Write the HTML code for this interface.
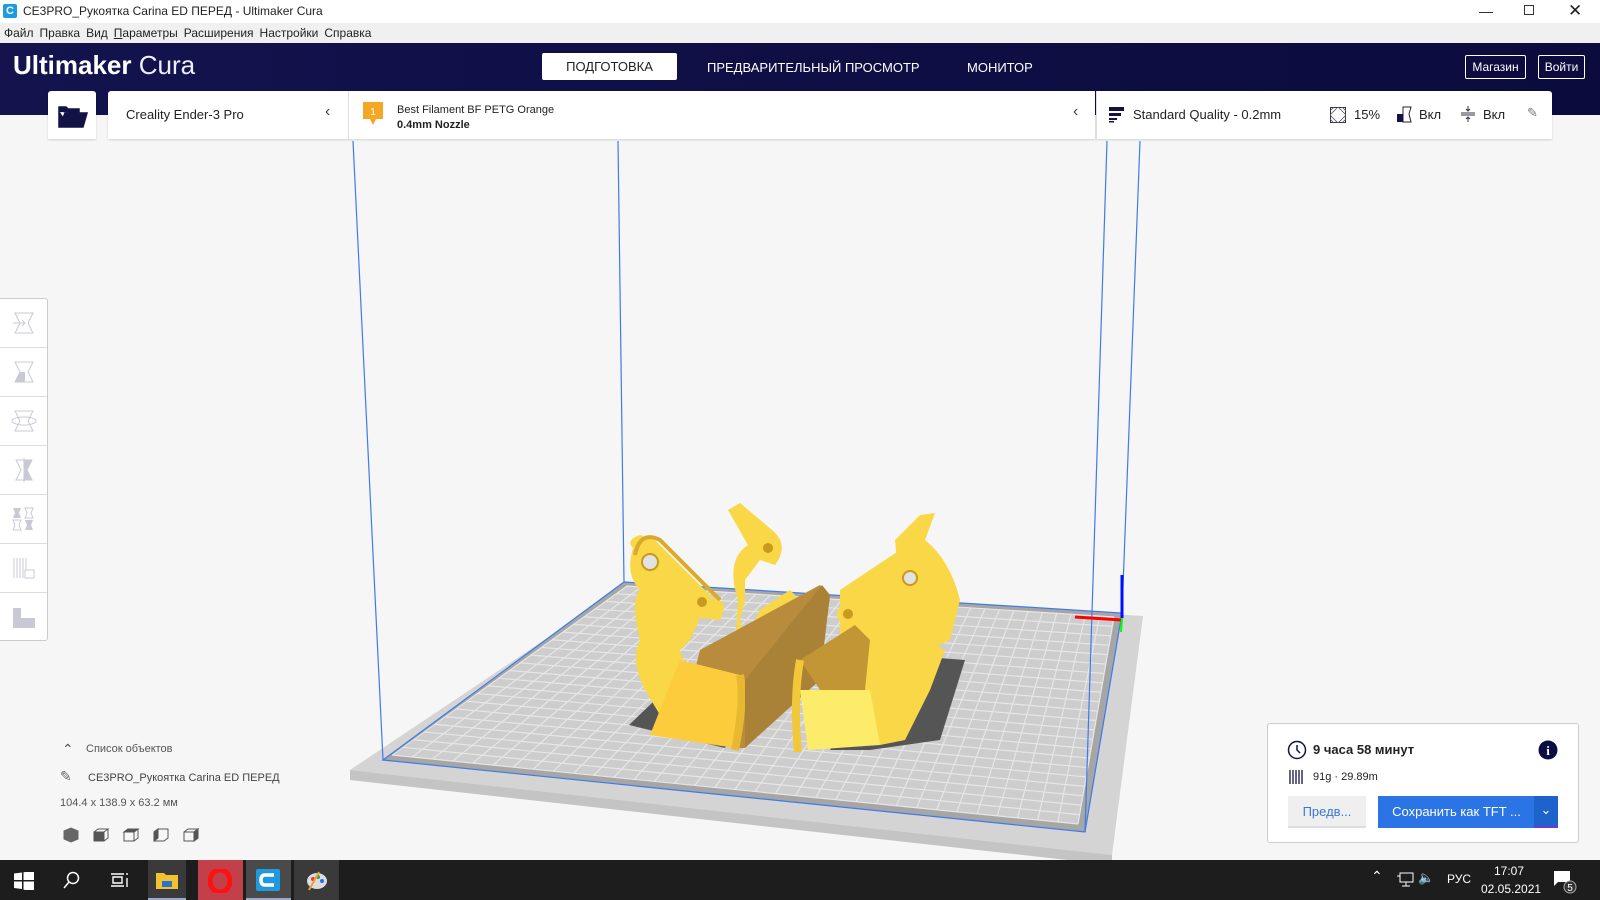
<!DOCTYPE html>
<html><head><meta charset="utf-8">
<style>
*{margin:0;padding:0;box-sizing:border-box}
body{width:1600px;height:900px;overflow:hidden;background:#f6f6f6;font-family:"Liberation Sans","Noto Sans CJK JP",sans-serif;position:relative;color:#222}
.abs{position:absolute}
#title{left:0;top:0;width:1600px;height:23px;background:#fff;font-size:12px;line-height:23px}
#menu{left:0;top:23px;width:1600px;height:20px;background:#f0f0f0;font-size:12px;line-height:20px}
#menu span{margin-left:4px;margin-right:2px}
#head{left:0;top:43px;width:1600px;height:72px;background:linear-gradient(90deg,#13134e,#0b0b3e)}
.box{background:#fff;box-shadow:0 1px 2px rgba(0,0,0,.15)}
.tab{color:#fff;font-size:13px;top:60px}
.btno{border:1px solid #fff;border-radius:2px;color:#fff;font-size:12px;text-align:center;line-height:22px;top:55px;height:24px}
#lt{left:0;top:298px;width:48px;height:343px;background:#fff;border:1px solid #ccc;border-left:none;border-radius:0 3px 3px 0}
#lt div{height:49px;border-bottom:1px solid #ddd;display:flex;align-items:center;justify-content:center}
#task{left:0;top:860px;width:1600px;height:40px;background:#1d1d1d}
</style></head><body>
<div id="title" class="abs"><span style="position:absolute;left:3px;top:4px;width:14px;height:14px;background:#1e9be0;border-radius:2px;color:#fff;font-size:11px;line-height:14px;text-align:center;font-weight:bold">C</span><span style="position:absolute;left:23px">CE3PRO_Рукоятка Carina ED ПЕРЕД - Ultimaker Cura</span>
<span style="position:absolute;left:1479px;top:0;font-size:14px">&#8212;</span>
<span style="position:absolute;left:1524px;top:5px;width:10px;height:10px;border:1px solid #333"></span>
<span style="position:absolute;left:1568px;top:-1px;font-size:17px">&#10005;</span></div>
<div id="menu" class="abs"><span>Файл</span><span>Правка</span><span>Вид</span><span><u>П</u>араметры</span><span>Расширения</span><span>Настройки</span><span>Справка</span></div>
<div id="head" class="abs">
<div class="abs" style="left:13px;top:5px;color:#fff;font-size:26px;line-height:34px"><b style="font-weight:bold">Ultimaker</b> <span style="font-weight:300;color:#eef">Cura</span></div>
</div>
<div class="abs" style="left:542px;top:53px;width:135px;height:27px;background:#fff;border-radius:2px;font-size:13px;text-align:center;line-height:27px;color:#222">ПОДГОТОВКА</div>
<div class="abs tab" style="left:707px">ПРЕДВАРИТЕЛЬНЫЙ ПРОСМОТР</div>
<div class="abs tab" style="left:967px">МОНИТОР</div>
<div class="abs btno" style="left:1465px;width:61px">Магазин</div>
<div class="abs btno" style="left:1538px;width:47px">Войти</div>

<div class="abs box" style="left:48px;top:91px;width:48px;height:48px;border-radius:3px 3px 0 0">
<svg width="48" height="48"><path d="M11 21 L11 36 L35 36 L39 22 L17 22 L15 27 Z M11 21 L11 16 L18 16 L20 18 L31 18 L31 22" fill="#121245" stroke="#121245" stroke-width="1.5"/></svg></div>
<div class="abs box" style="left:108px;top:91px;width:987px;height:48px;border-radius:3px 0 0 0"></div>
<div class="abs" style="left:348px;top:91px;width:1px;height:48px;background:#ddd"></div>
<div class="abs" style="left:126px;top:107px;font-size:13px">Creality Ender-3 Pro</div>
<div class="abs" style="left:325px;top:103px;font-size:16px;color:#444">&#8249;</div>
<svg class="abs" style="left:362px;top:101px" width="22" height="26"><path d="M1 1 H21 V18 H14 L11 24 L8 18 H1 Z" fill="#f5a623"/><text x="11" y="14" font-size="10" fill="#fff" text-anchor="middle" font-family="Liberation Sans">1</text></svg>
<div class="abs" style="left:397px;top:104px;font-size:11px">Best Filament BF PETG Orange</div>
<div class="abs" style="left:397px;top:119px;font-size:11px;font-weight:bold">0.4mm Nozzle</div>
<div class="abs" style="left:1073px;top:103px;font-size:16px;color:#444">&#8249;</div>
<div class="abs box" style="left:1096px;top:91px;width:456px;height:48px;border-radius:0 3px 0 0;border-left:1px solid #ddd"></div>
<svg class="abs" style="left:1109px;top:107px" width="16" height="16"><rect x="0" y="0" width="15" height="4" fill="#121245"/><rect x="0" y="6" width="12" height="3" fill="#121245"/><rect x="0" y="11" width="8" height="2" fill="#121245"/><rect x="0" y="14" width="5" height="1.5" fill="#121245"/></svg>
<div class="abs" style="left:1133px;top:107px;font-size:13px">Standard Quality - 0.2mm</div>
<svg class="abs" style="left:1330px;top:107px" width="16" height="16"><rect x=".5" y=".5" width="15" height="15" fill="none" stroke="#334"/><path d="M0 8 L8 0 L16 8 L8 16Z M0 4 L4 0 M12 0 L16 4 M16 12 L12 16 M4 16 L0 12" fill="none" stroke="#556" stroke-width=".8"/></svg>
<div class="abs" style="left:1354px;top:107px;font-size:13px">15%</div>
<svg class="abs" style="left:1396px;top:106px" width="16" height="17"><path d="M7 1 H15 L13 8 L15 16 H7 Z" fill="none" stroke="#223"/><path d="M1 8 H7 V16 H1Z" fill="#121245"/></svg>
<div class="abs" style="left:1419px;top:107px;font-size:13px">Вкл</div>
<svg class="abs" style="left:1461px;top:106px" width="14" height="16"><path d="M0 7 H14 M0 9 H14 M7 0 V5 M7 11 V16" stroke="#334" stroke-width="1"/><path d="M5 3 L7 5 L9 3 M5 13 L7 11 L9 13" fill="none" stroke="#334"/></svg>
<div class="abs" style="left:1483px;top:107px;font-size:13px">Вкл</div>
<div class="abs" style="left:1527px;top:105px;font-size:13px;color:#777">&#9998;</div>

<svg class="abs" style="left:0;top:0" width="1600" height="900">
<defs><clipPath id="pc"><polygon points="389,757 627,584 1117,615 1080,826"/></clipPath></defs>
<polygon points="350,770 628,584 1143,616 1112,855" fill="#d4d4d4"/>
<polygon points="350,770 350,780 1112,865 1112,855" fill="#c4c4c4"/>
<polygon points="383,760 624,582 1122,613 1085,832" fill="#a6a6a6"/>
<polygon points="392,755 627,586 1114,617 1078,824" fill="#cdcdcd"/>
<g id="grid" clip-path="url(#pc)" stroke="#e6e6e6" stroke-width="1.2"></g>
<polygon points="383,760 624,582 1122,613 1085,832" fill="none" stroke="#3d7be8" stroke-width="1.2"/>
<line x1="353" y1="141" x2="383" y2="760" stroke="#3d7be8" stroke-width="1.2"/>
<line x1="618" y1="141" x2="624" y2="582" stroke="#3d7be8" stroke-width="1.2"/>
<line x1="1107" y1="141" x2="1085" y2="832" stroke="#3d7be8" stroke-width="1.2"/>
<line x1="1140" y1="141" x2="1122" y2="613" stroke="#3d7be8" stroke-width="1.2"/>
<line x1="1122" y1="575" x2="1122" y2="618" stroke="#0010ff" stroke-width="3"/>
<line x1="1075" y1="617" x2="1122" y2="620" stroke="#f00" stroke-width="3"/>
<line x1="1122" y1="618" x2="1121" y2="632" stroke="#0f0" stroke-width="2"/>
<polygon points="629,725 655,700 730,740 725,748" fill="#555"/>
<polygon points="900,655 965,660 940,740 870,750 830,750 860,700" fill="#555"/>
<path d="M633 548 Q625 540 640 535 L655 540 L715 600 Q730 600 720 620 L700 618 L690 640 L680 650 L690 680 L700 700 L720 660 L735 650 L730 745 L660 715 L645 690 Q630 660 640 640 Q630 600 640 590 Q625 575 633 548Z" fill="#f9d746"/>
<path d="M635 555 Q640 530 660 540 L720 600" fill="none" stroke="#d9a92a" stroke-width="4"/>
<circle cx="650" cy="562" r="8" fill="#e2e2e2" stroke="#c59a20" stroke-width="2"/>
<circle cx="702" cy="602" r="5" fill="#c99a20"/>
<path d="M728 510 L740 503 L772 530 Q790 545 775 565 L760 560 L745 580 L745 600 L740 620 L745 640 L760 610 L790 590 L800 600 L750 650 L735 650 L738 600 Q725 560 748 545 Z" fill="#f9d746"/>
<circle cx="768" cy="548" r="5" fill="#c99a20"/>
<polygon points="700,650 820,585 830,600 745,748 735,748 680,730" fill="#b88c3c"/>
<polygon points="680,660 740,675 735,748 650,735" fill="#fccc3c"/>
<path d="M740 675 Q745 700 735 750" stroke="#e8b830" stroke-width="8" fill="none"/>
<polygon points="745,680 822,585 830,595 820,680 745,748" fill="#a98238"/>
<path d="M895 540 L920 515 L935 513 L925 540 Q950 560 960 600 L950 640 L930 650 L905 640 Z" fill="#f9d746"/>
<path d="M840 590 L900 550 Q925 560 930 590 L925 640 L945 650 L930 690 L905 740 L880 745 L860 730 L840 650 Z" fill="#f9d746"/>
<circle cx="910" cy="578" r="7" fill="#e2e2e2" stroke="#c59a20" stroke-width="2"/>
<circle cx="848" cy="614" r="11" fill="#f9d746"/>
<circle cx="848" cy="614" r="5" fill="#c99a20"/>
<polygon points="800,660 855,625 870,640 865,690 820,690" fill="#c29535"/>
<polygon points="800,690 870,690 880,745 808,750" fill="#fdeb6a"/>
<path d="M800 660 Q793 700 798 752" stroke="#f2c838" stroke-width="8" fill="none"/>
</svg>

<div id="lt" class="abs">
<div><svg width="26" height="24"><path d="M4 2 H22 L17 12 L22 22 H4 L9 12Z" fill="none" stroke="#c9c9d6"/><path d="M2 12 H14 M11 9 L14 12 L11 15" stroke="#c9c9d6" fill="none"/></svg></div>
<div><svg width="26" height="24"><path d="M4 2 H22 L17 12 L22 22 H4 L9 12Z" fill="none" stroke="#c9c9d6"/><path d="M9 12 H14 V22 H4Z" fill="#c9c9d6"/></svg></div>
<div><svg width="26" height="24"><path d="M4 2 H22 L17 12 L22 22 H4 L9 12Z" fill="none" stroke="#c9c9d6"/><ellipse cx="13" cy="12" rx="12" ry="4" fill="none" stroke="#c9c9d6"/></svg></div>
<div><svg width="26" height="24"><path d="M5 2 H21 L16 12 L21 22 H5 L10 12Z" fill="none" stroke="#c9c9d6"/><path d="M13 2 H21 L16 12 L21 22 H13Z" fill="#c9c9d6"/><line x1="13" y1="0" x2="13" y2="24" stroke="#c9c9d6"/></svg></div>
<div><svg width="26" height="24"><path d="M2 1 H10 L8 6 L10 11 H2 L4 6Z M14 13 H22 L20 18 L22 23 H14 L16 18Z" fill="#c9c9d6"/><path d="M2 13 H10 L8 18 L10 23 H2 L4 18Z M14 1 H22 L20 6 L22 11 H14 L16 6Z" fill="none" stroke="#c9c9d6"/></svg></div>
<div><svg width="26" height="24"><path d="M3 2 V22 M6 2 V22 M9 2 V22 M12 2 V22 M15 2 V14" stroke="#c9c9d6"/><rect x="14" y="14" width="9" height="8" fill="none" stroke="#c9c9d6"/></svg></div>
<div style="border:none"><svg width="26" height="24"><path d="M2 2 H10 V12 H24 V22 H2Z" fill="#c9c9d6"/></svg></div>
</div>

<div class="abs" style="left:62px;top:741px;font-size:14px;color:#555">&#8963;</div>
<div class="abs" style="left:86px;top:743px;font-size:11px;color:#555">Список объектов</div>
<div class="abs" style="left:60px;top:768px;font-size:14px;color:#666">&#9998;</div>
<div class="abs" style="left:88px;top:772px;font-size:11px;color:#444">CE3PRO_Рукоятка Carina ED ПЕРЕД</div>
<div class="abs" style="left:60px;top:797px;font-size:11px;color:#555">104.4 x 138.9 x 63.2 мм</div>
<svg class="abs" style="left:62px;top:826px" width="150" height="20">
<g fill="#666" stroke="#666"><path d="M2 5 L9 2 L16 5 L16 13 L9 16 L2 13Z"/></g>
<g stroke="#555" fill="none"><path d="M32 6 H42 V15 H32Z M32 6 L36 3 H46 L42 6 M46 3 V12 L42 15"/><rect x="32" y="6" width="10" height="9" fill="#555"/>
<path d="M62 6 H72 V15 H62Z M62 6 L66 3 H76 L72 6 M76 3 V12 L72 15"/><path d="M62 6 L66 3 H76 L72 6Z" fill="#555"/>
<path d="M92 6 L96 3 H106 V12 L102 15 H92Z M96 3 V12"/><path d="M92 6 L96 3 V12 L92 15Z" fill="#555"/>
<path d="M122 6 H132 V15 H122Z M122 6 L126 3 H136 L132 6 M136 3 V12 L132 15"/><path d="M132 6 L136 3 V12 L132 15Z" fill="#555"/></g></svg>

<div class="abs" style="left:1267px;top:723px;width:312px;height:120px;background:#fff;border:1px solid #ccc;border-radius:3px"></div>
<svg class="abs" style="left:1287px;top:740px" width="20" height="20"><circle cx="10" cy="10" r="8.5" fill="none" stroke="#121245" stroke-width="1.5"/><path d="M10 5 V10 L13 13" stroke="#121245" stroke-width="1.5" fill="none"/></svg>
<div class="abs" style="left:1313px;top:742px;font-size:13px;font-weight:bold">9 часа 58 минут</div>
<svg class="abs" style="left:1538px;top:740px" width="20" height="20"><circle cx="10" cy="10" r="9.5" fill="#0d0d45"/><text x="10" y="15" font-size="13" font-weight="bold" fill="#fff" text-anchor="middle" font-family="Liberation Serif">i</text></svg>
<svg class="abs" style="left:1289px;top:769px" width="16" height="16"><path d="M1 1 V15 M4 1 V15 M7 1 V15 M10 1 V15 M13 1 V15" stroke="#121245" stroke-width="1.3"/></svg>
<div class="abs" style="left:1313px;top:771px;font-size:11px">91g · 29.89m</div>
<div class="abs" style="left:1288px;top:796px;width:78px;height:32px;background:#efefef;border-bottom:2px solid #ddd;color:#3a78d6;font-size:13px;text-align:center;line-height:31px">Предв...</div>
<div class="abs" style="left:1378px;top:796px;width:157px;height:32px;background:#2a74e6;color:#fff;font-size:13px;text-align:center;line-height:32px">Сохранить как TFT ...</div>
<div class="abs" style="left:1534px;top:796px;width:24px;height:32px;background:#1e62cc;border-bottom:2px solid #6a3ad0;color:#fff;text-align:center;line-height:28px;font-size:13px">&#8964;</div>

<div id="task" class="abs">
<svg class="abs" style="left:14px;top:12px" width="20" height="18"><path d="M0 1.5 L8 0.5 V8 H0Z M9.5 0.3 L20 -1 V8 H9.5Z M0 9.5 H8 V17 L0 16Z M9.5 9.5 H20 V19 L9.5 17.7Z" fill="#fff"/></svg>
<svg class="abs" style="left:62px;top:10px" width="20" height="20"><circle cx="11" cy="8" r="5.5" fill="none" stroke="#fff" stroke-width="1.5"/><line x1="7" y1="12" x2="2" y2="18" stroke="#fff" stroke-width="1.5"/></svg>
<svg class="abs" style="left:110px;top:11px" width="20" height="18"><path d="M1 3 H14 M1 15 H14 M3 6 H12 V12 H3Z M17 2 V4 M17 7 V16" stroke="#fff" stroke-width="1.4" fill="none"/></svg>
<div class="abs" style="left:148px;top:0;width:38px;height:40px;background:#3a3a3a;border-bottom:2px solid #9ac"></div>
<svg class="abs" style="left:155px;top:10px" width="24" height="20"><path d="M1 3 H9 L11 5 H23 V19 H1Z" fill="#f3c132"/><rect x="7" y="11" width="10" height="6" fill="#2b73c4"/></svg>
<div class="abs" style="left:198px;top:0;width:45px;height:40px;background:#c1404a"></div>
<svg class="abs" style="left:208px;top:9px" width="24" height="24"><ellipse cx="12" cy="12" rx="10" ry="11" fill="none" stroke="#f11" stroke-width="5"/></svg>
<div class="abs" style="left:246px;top:0;width:45px;height:40px;background:#4a4a4a;border-bottom:2px solid #9ac"></div>
<svg class="abs" style="left:256px;top:9px" width="24" height="22"><rect width="24" height="22" rx="2" fill="#1e9be0"/><path d="M18 6 H9 Q5 6 5 11 Q5 16 9 16 H18" stroke="#fff" stroke-width="3.5" fill="none"/></svg>
<div class="abs" style="left:294px;top:0;width:45px;height:40px;background:#3a3a3a"></div>
<svg class="abs" style="left:305px;top:8px" width="24" height="24"><ellipse cx="12" cy="13" rx="10" ry="8" fill="#ddd"/><circle cx="8" cy="11" r="2" fill="#e33"/><circle cx="13" cy="9" r="2" fill="#3a3"/><circle cx="17" cy="13" r="2" fill="#36f"/><path d="M4 22 L14 4" stroke="#e8a23a" stroke-width="2"/></svg>
<div class="abs" style="left:1371px;top:8px;color:#fff;font-size:14px">&#8963;</div>
<svg class="abs" style="left:1396px;top:12px" width="18" height="16"><rect x="4" y="1" width="13" height="9" fill="none" stroke="#fff"/><path d="M10 10 V14 M6 14 H14 M1 4 H4" stroke="#fff"/></svg>
<div class="abs" style="left:1418px;top:10px;color:#fff;font-size:13px">&#128264;</div>
<div class="abs" style="left:1447px;top:12px;color:#fff;font-size:12px">РУС</div>
<div class="abs" style="left:1494px;top:4px;color:#fff;font-size:12px">17:07</div>
<div class="abs" style="left:1481px;top:22px;color:#fff;font-size:12px">02.05.2021</div>
<svg class="abs" style="left:1553px;top:10px" width="26" height="24"><path d="M1 1 H17 V12 H5 L1 16Z" fill="#fff"/><circle cx="17" cy="17" r="6" fill="#333" stroke="#aaa"/><text x="17" y="21" font-size="10" fill="#fff" text-anchor="middle" font-family="Liberation Sans">5</text></svg>
</div>
<script>
(function(){
var g=document.getElementById('grid');
var A=[392,755],B=[627,586],C=[1114,617],D=[1078,824];
function lerp(p,q,t){return [p[0]+(q[0]-p[0])*t,p[1]+(q[1]-p[1])*t];}
var s='',N=34,M=22;
for(var i=0;i<=N;i++){var t=i/N;var p=lerp(A,D,t),q=lerp(B,C,t);s+='<line x1="'+p[0]+'" y1="'+p[1]+'" x2="'+q[0]+'" y2="'+q[1]+'"/>';}
for(var j=0;j<=M;j++){var t=j/M;var p=lerp(A,B,t),q=lerp(D,C,t);s+='<line x1="'+p[0]+'" y1="'+p[1]+'" x2="'+q[0]+'" y2="'+q[1]+'"/>';}
g.innerHTML=s;
})();
</script>
</body></html>
